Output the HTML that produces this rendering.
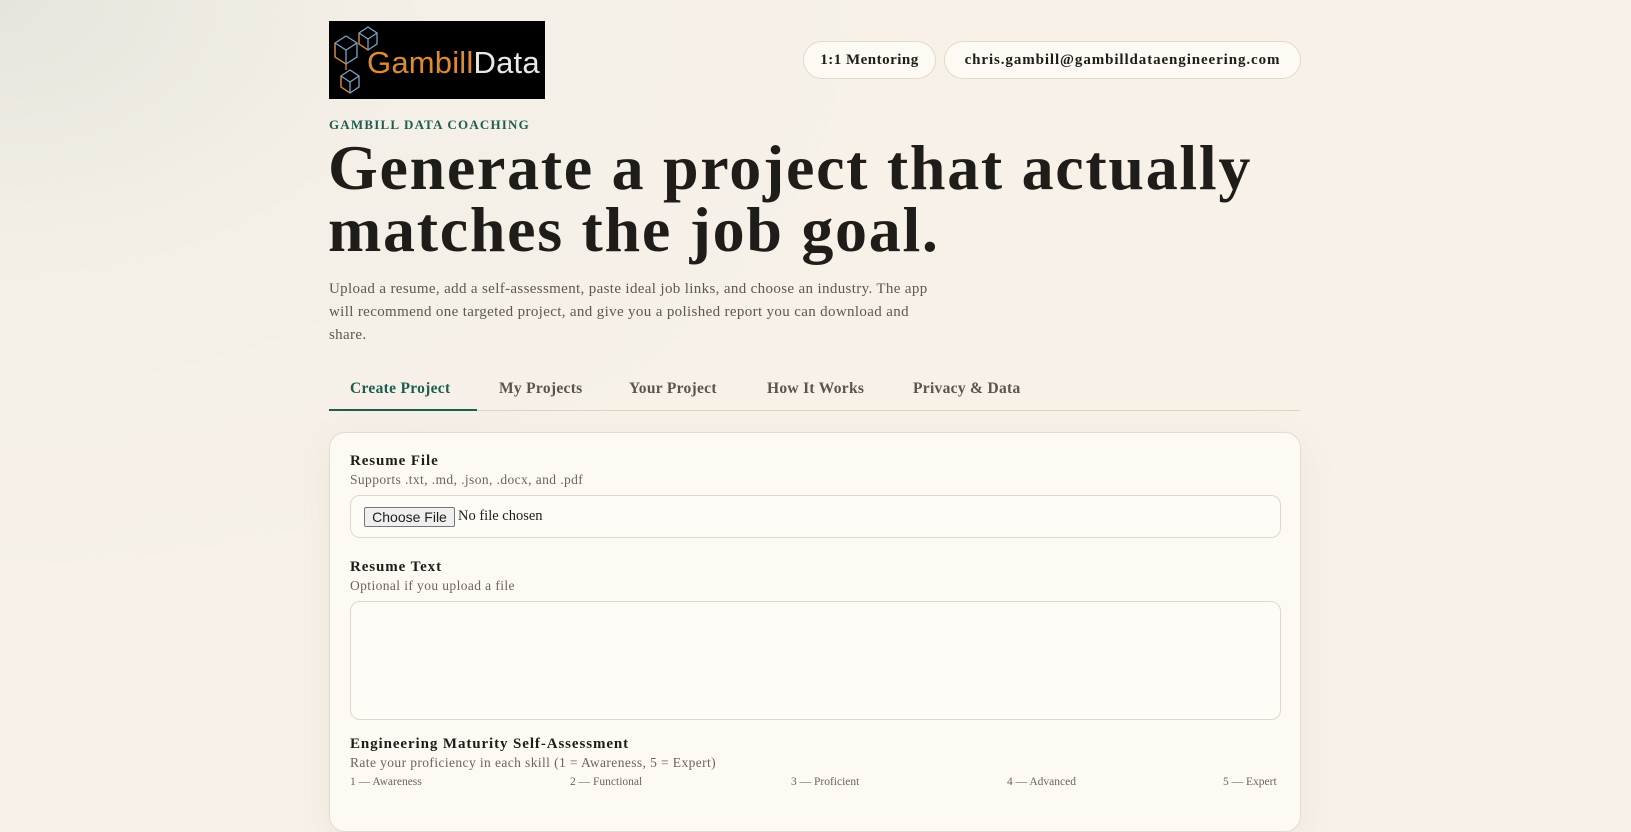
<!DOCTYPE html>
<html><head><meta charset="utf-8"><style>
*{box-sizing:border-box;margin:0;padding:0}
html{background:#f7f1e8}
body{width:1631px;height:804px;overflow:hidden;background:radial-gradient(ellipse 900px 600px at 0 0,#e6e4dc 0,#f3efe7 40%,#f7f1e8 100%);font-family:"Liberation Serif",serif;color:#1f1d1a;position:relative}
.logo{position:absolute;left:329px;top:21px;width:216px;height:78px;background:#000;overflow:hidden}
.logo span{position:absolute;left:38px;top:24px;font-family:"Liberation Sans",sans-serif;font-size:31px;color:#e08a2e;letter-spacing:.2px}
.logo span b{font-weight:normal;color:#e8e8e8}
.pill{position:absolute;top:41px;height:38px;border:1px solid #e2d9c8;border-radius:19px;background:#fdfaf4;font-weight:bold;font-size:15px;line-height:36px;text-align:center;letter-spacing:.5px}
.eyebrow{position:absolute;left:329px;top:117px;font-size:13px;font-weight:bold;letter-spacing:1.2px;color:#1e5e4e}
h1{position:absolute;left:328px;top:137px;font-size:64px;line-height:62px;font-weight:bold;letter-spacing:1.7px;width:1000px}
p.lead{position:absolute;left:329px;top:278px;width:600px;font-size:15px;line-height:23px;color:#5e5850;letter-spacing:.35px}
.tabs{position:absolute;left:329px;top:372px;width:971px;height:39px;border-bottom:1px solid #ddd4c4}
.tab{position:absolute;top:8px;font-size:15.5px;font-weight:bold;color:#5a544b;letter-spacing:.3px}
.tab.a{color:#1e5e4e}
.ul{position:absolute;left:0;top:37px;width:148px;height:2px;background:#1e5e4e}
.card{position:absolute;left:329px;top:432px;width:972px;height:400px;background:#fdfaf4;border:1px solid #e5dccb;border-radius:16px;box-shadow:0 10px 40px rgba(120,100,60,.08)}
.lbl{position:absolute;left:20px;font-size:15px;font-weight:bold;letter-spacing:.9px}
.sub{position:absolute;left:20px;font-size:13.5px;color:#6b655c;letter-spacing:.4px}
.box{position:absolute;left:20px;width:931px;border:1px solid #e0d7c6;border-radius:10px;background:#fefcf7}
.btn{position:absolute;left:13px;top:11px;width:91px;height:20px;border:1px solid #767676;background:#efefef;font-family:"Liberation Sans",sans-serif;font-size:14px;line-height:18px;text-align:center;border-radius:2px}
.nf{position:absolute;left:107px;top:12px;font-size:14.5px}
.sc{position:absolute;top:343px;font-size:11.5px;color:#6b655c}
</style></head><body>
<div class="logo">
<svg width="60" height="78" style="position:absolute;left:0;top:0" fill="none" stroke-width="1.3">
<g stroke="#7aa4c4"><path d="M6 22l11-7 11 7v14l-11 7-11-7z M6 22l11 7 11-7 M17 29v14"/><path d="M30 12l9-6 9 6v11l-9 6-9-6z M30 12l9 6 9-6 M39 18v11"/><path d="M12 55l9-6 9 6v11l-9 6-9-6z M12 55l9 6 9-6 M21 61v11"/></g>
<g stroke="#d9822b"><path d="M6 22v14l11 7"/><path d="M30 12v11l9 6"/><path d="M12 55v11l9 6"/><path d="M17 43v6"/></g></svg>
<span>Gambill<b>Data</b></span></div>
<div class="pill" style="left:803px;width:133px">1:1 Mentoring</div>
<div class="pill" style="left:944px;width:357px;letter-spacing:.9px">chris.gambill@gambilldataengineering.com</div>
<div class="eyebrow">GAMBILL DATA COACHING</div>
<h1>Generate a project that actually matches the job goal.</h1>
<p class="lead">Upload a resume, add a self-assessment, paste ideal job links, and choose an industry. The app will recommend one targeted project, and give you a polished report you can download and share.</p>
<div class="tabs">
<div class="tab a" style="left:21px">Create Project</div>
<div class="tab" style="left:170px">My Projects</div>
<div class="tab" style="left:300px">Your Project</div>
<div class="tab" style="left:438px">How It Works</div>
<div class="tab" style="left:584px">Privacy &amp; Data</div>
<div class="ul"></div></div>
<div class="card">
<div class="lbl" style="top:20px">Resume File</div>
<div class="sub" style="top:39px">Supports .txt, .md, .json, .docx, and .pdf</div>
<div class="box" style="top:62px;height:43px"><div class="btn">Choose File</div><div class="nf">No file chosen</div></div>
<div class="lbl" style="top:126px">Resume Text</div>
<div class="sub" style="top:145px">Optional if you upload a file</div>
<div class="box" style="top:168px;height:119px"></div>
<div class="lbl" style="top:303px">Engineering Maturity Self-Assessment</div>
<div class="sub" style="top:322px">Rate your proficiency in each skill (1 = Awareness, 5 = Expert)</div>
<div class="sc" style="left:20px">1 — Awareness</div>
<div class="sc" style="left:240px">2 — Functional</div>
<div class="sc" style="left:461px">3 — Proficient</div>
<div class="sc" style="left:677px">4 — Advanced</div>
<div class="sc" style="left:893px">5 — Expert</div>
</div>
</body></html>
